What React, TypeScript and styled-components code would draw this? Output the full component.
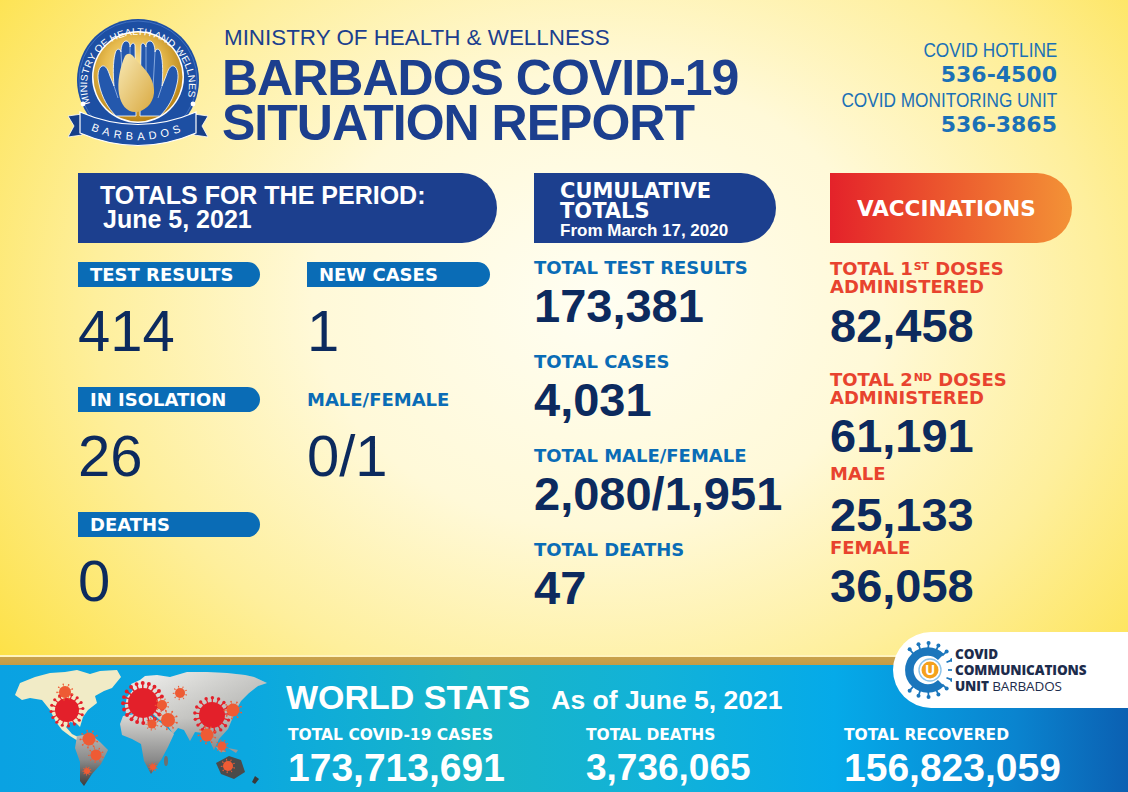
import React from "react";
import styled, { createGlobalStyle } from "styled-components";

const GlobalStyle = createGlobalStyle`
  * { box-sizing: border-box; }
  html, body { margin: 0; padding: 0; }
  body { font-family: "Liberation Sans", Arial, sans-serif; }
`;

const NAVY = "#0c2a5e";
const ROYAL = "#1c3f8e";
const SKY = "#0a6cb6";
const RED = "#e8432e";
const HEAVY = `"DejaVu Sans", "Liberation Sans", sans-serif`;

const Page = styled.div`
  position: relative;
  width: 1128px;
  height: 792px;
  overflow: hidden;
  display: flex;
  flex-direction: column;
  background: radial-gradient(
    ellipse 72% 82% at 53% 38%,
    #fffef2 0%,
    #fff9d8 35%,
    #feef9c 62%,
    #fde24c 90%,
    #fddc30 100%
  );
`;

const Header = styled.header`
  display: flex;
  height: 173px;
  padding: 0 71px 0 68px;
`;

const LogoSvg = styled.svg`
  flex-shrink: 0;
  margin-top: 14px;
`;

const TitleBlock = styled.div`
  margin-left: 14px;
  padding-top: 27px;
  color: ${ROYAL};
`;

const Ministry = styled.div`
  margin: 0 0 7px 2px;
  font-size: 22.4px;
  line-height: 22px;
`;

const BigTitle = styled.div`
  font-size: 50px;
  font-weight: 700;
  line-height: 45px;
  letter-spacing: -1px;
  white-space: nowrap;
`;

const Contact = styled.div`
  margin-left: auto;
  padding-top: 37px;
  text-align: right;
  color: #1b70b6;
`;

const ContactLabel = styled.div`
  font-size: 21px;
  line-height: 25px;
  white-space: nowrap;
`;

const Narrow = styled.span`
  display: inline-block;
  transform: scaleX(0.82);
  transform-origin: right center;
`;

const ContactPhone = styled.div`
  font-family: ${HEAVY};
  font-weight: 700;
  font-size: 22px;
  line-height: 25px;
`;

const Main = styled.main`
  display: flex;
  padding-left: 78px;
`;

const Column = styled.section<{ $w: number; $ml?: number }>`
  width: ${({ $w }) => $w}px;
  margin-left: ${({ $ml }) => $ml ?? 0}px;
  display: flex;
  flex-direction: column;
`;

const Pill = styled.div<{ $bg: string }>`
  height: 70px;
  border-radius: 0 35px 35px 0;
  background: ${({ $bg }) => $bg};
  color: #fff;
`;

const PeriodPill = styled(Pill)`
  padding: 10px 0 0 22px;
  font-size: 25px;
  font-weight: 700;
  line-height: 24px;
  & > div + div {
    padding-left: 3px;
  }
`;

const CumulativePill = styled(Pill)`
  padding: 8px 0 0 26px;
`;

const PillHeavy = styled.div`
  font-family: ${HEAVY};
  font-weight: 700;
  font-size: 21px;
  line-height: 20px;
`;

const PillSmall = styled.div`
  margin-top: 1px;
  font-size: 17px;
  font-weight: 700;
  line-height: 18px;
`;

const VaxPill = styled(Pill)`
  display: flex;
  align-items: center;
  padding-left: 27px;
  font-family: ${HEAVY};
  font-weight: 700;
  font-size: 21.5px;
`;

const PeriodGrid = styled.div`
  display: grid;
  grid-template-columns: 229px 183px;
  row-gap: 27px;
  margin-top: 19px;
`;

const StatCell = styled.div`
  display: flex;
  flex-direction: column;
`;

const Bar = styled.div<{ $w: number }>`
  width: ${({ $w }) => $w}px;
  height: 25px;
  display: flex;
  align-items: center;
  padding-left: 12px;
  border-radius: 0 13px 13px 0;
  background: ${SKY};
  color: #fff;
  font-family: ${HEAVY};
  font-weight: 700;
  font-size: 18px;
`;

const PlainLabel = styled.div`
  height: 25px;
  display: flex;
  align-items: center;
  color: ${SKY};
  font-family: ${HEAVY};
  font-weight: 700;
  font-size: 18px;
`;

const PeriodValue = styled.div`
  margin-top: 15px;
  font-size: 58px;
  line-height: 58px;
  color: ${NAVY};
`;

const Group = styled.div<{ $mt: number }>`
  margin-top: ${({ $mt }) => $mt}px;
`;

const Label = styled.div<{ $color: string }>`
  color: ${({ $color }) => $color};
  font-family: ${HEAVY};
  font-weight: 700;
  font-size: 18px;
  line-height: 20px;
  white-space: nowrap;
`;

const VaxLabel = styled(Label)`
  line-height: 18px;
`;

const Sup = styled.span`
  font-size: 11px;
  line-height: 11px;
  vertical-align: 5px;
  margin-left: 1px;
`;

const Value = styled.div<{ $mt: number }>`
  margin-top: ${({ $mt }) => $mt}px;
  font-size: 47px;
  font-weight: 700;
  line-height: 47px;
  color: ${NAVY};
  white-space: nowrap;
`;

const Bottom = styled.footer`
  position: relative;
  margin-top: auto;
  height: 137px;
  display: flex;
  flex-direction: column;
`;

const GoldLine = styled.div`
  height: 10px;
  background: linear-gradient(to bottom, #fff4bd 0, #fff4bd 2px, #c9a24c 2px, #c49b45 100%);
`;

const BlueBar = styled.div`
  flex: 1;
  display: flex;
  background: linear-gradient(
    90deg,
    #0aa2e2 0%,
    #0ba8e0 22%,
    #18b5c7 42%,
    #12b2d8 58%,
    #05aae9 74%,
    #0a84cf 90%,
    #0b60b2 100%
  );
`;

const MapSvg = styled.svg`
  flex-shrink: 0;
  margin-left: 4px;
`;

const WorldBlock = styled.div`
  margin-left: 6px;
  padding-top: 15px;
  color: #fff;
`;

const WorldHeading = styled.div`
  display: flex;
  align-items: baseline;
  gap: 21px;
  font-weight: 700;
`;

const WorldTitle = styled.span`
  font-size: 34px;
  line-height: 34px;
`;

const WorldDate = styled.span`
  font-size: 26.5px;
`;

const WorldGrid = styled.div`
  display: grid;
  grid-template-columns: 298px 258px auto;
  margin-top: 11px;
  padding-left: 2px;
`;

const WorldLabel = styled.div`
  font-family: ${HEAVY};
  font-weight: 700;
  font-size: 15.5px;
  line-height: 17px;
`;

const WorldValue = styled.div<{ $size: number }>`
  margin-top: 4px;
  font-size: ${({ $size }) => $size}px;
  font-weight: 700;
  line-height: 40px;
`;

const Badge = styled.div`
  position: absolute;
  top: -23px;
  right: 0;
  width: 235px;
  height: 76px;
  display: flex;
  align-items: center;
  padding-left: 7px;
  border-radius: 38px 0 0 38px;
  background: #fff;
`;

const BadgeText = styled.div`
  margin-left: 3px;
  font-family: "Open Sans", "Liberation Sans", sans-serif;
  font-size: 13.5px;
  line-height: 16px;
  font-weight: 800;
  color: #1d2c4c;
  letter-spacing: -0.1px;
`;

const Light = styled.span`
  font-weight: 400;
`;

/* ---------- drawings ---------- */

const MinistryLogo = () => (
  <LogoSvg width={140} height={134} viewBox="0 0 140 134">
    <defs>
      <radialGradient id="gold" cx="45%" cy="40%" r="60%">
        <stop offset="0%" stopColor="#fbe7a0" />
        <stop offset="55%" stopColor="#e7bb4f" />
        <stop offset="100%" stopColor="#b98417" />
      </radialGradient>
      <linearGradient id="island" x1="0" y1="0" x2="1" y2="1">
        <stop offset="0%" stopColor="#f8e9b4" />
        <stop offset="100%" stopColor="#d9a941" />
      </linearGradient>
      <path id="arcTop" d="M 21 86 A 51 51 0 1 1 119 86" />
      <path id="arcRibbon" d="M 18 114 Q 70 138 122 114" />
    </defs>
    <circle cx="70" cy="66" r="61" fill="#1d4fa3" />
    <circle cx="70" cy="66" r="59" fill="none" stroke="#3f6fc0" strokeWidth="1" />
    <circle cx="70" cy="63" r="46" fill="#fff" />
    <circle cx="70" cy="63" r="44.5" fill="url(#gold)" />
    <text fill="#fff" fontSize="9.6" fontFamily="Liberation Sans, sans-serif">
      <textPath href="#arcTop" startOffset="50%" textAnchor="middle" textLength="196" lengthAdjust="spacingAndGlyphs">
        MINISTRY OF HEALTH AND WELLNESS
      </textPath>
    </text>
    <circle cx="15" cy="90" r="2.4" fill="#fff" />
    <circle cx="125" cy="90" r="2.4" fill="#fff" />
    {/* left hand: thumb, palm and fingers */}
    <path
      d="M68 102 L48 102 C40 94 34 84 31 70 C29 62 30 54 34 52 C38 51 40 56 42 62 L46 72 C45 60 45 48 47 40 C48 34 52 34 53 38 C53 32 55 27 58 27 C61 27 62 30 62 33 C63 29 66 28 67 31 L68 102 Z"
      fill="#2458ad"
      stroke="#fff"
      strokeWidth="0.8"
    />
    {/* right hand mirrored */}
    <path
      d="M72 102 L92 102 C100 94 106 84 109 70 C111 62 110 54 106 52 C102 51 100 56 98 62 L94 72 C95 60 95 48 93 40 C92 34 88 34 87 38 C87 32 85 27 82 27 C79 27 78 30 78 33 C77 29 74 28 73 31 L72 102 Z"
      fill="#2458ad"
      stroke="#fff"
      strokeWidth="0.8"
    />
    <path
      d="M53 38 L55 74 M62 33 L62 72 M87 38 L85 74 M78 33 L78 72 M46 72 L50 84 M94 72 L90 84"
      stroke="#8fb0e2"
      strokeWidth="0.9"
      fill="none"
    />
    <path
      d="M57 42 C61 37 65 41 69 47 C77 55 85 63 86 75 C87 86 80 96 69 98 C59 99 53 91 51 80 C49 68 52 53 57 42 Z"
      fill="url(#island)"
    />
    <path d="M0 102 L14 100 L14 121 L0 123 L6 112 Z" fill="#163f88" stroke="#fff" strokeWidth="0.8" />
    <path d="M140 102 L126 100 L126 121 L140 123 L134 112 Z" fill="#163f88" stroke="#fff" strokeWidth="0.8" />
    <path d="M12 98 Q70 123 128 98 L128 119 Q70 144 12 119 Z" fill="#1d4fa3" stroke="#fff" strokeWidth="1.2" />
    <text fill="#fff" fontSize="11" fontFamily="Liberation Sans, sans-serif" letterSpacing="4.5">
      <textPath href="#arcRibbon" startOffset="50%" textAnchor="middle">
        BARBADOS
      </textPath>
    </text>
  </LogoSvg>
);

type VirusProps = { x: number; y: number; r: number; color: string };

const Virus = ({ x, y, r, color }: VirusProps) => {
  const count = Math.max(9, Math.round(r * 1.3));
  const spikes = Array.from({ length: count }, (_, i) => {
    const a = (i / count) * Math.PI * 2 + 0.3;
    const c = Math.cos(a);
    const s = Math.sin(a);
    return (
      <g key={i}>
        <line
          x1={x + c * r * 0.9}
          y1={y + s * r * 0.9}
          x2={x + c * r * 1.3}
          y2={y + s * r * 1.3}
          stroke={color}
          strokeWidth={Math.max(0.6, r * 0.1)}
        />
        <circle cx={x + c * r * 1.33} cy={y + s * r * 1.33} r={Math.max(0.6, r * 0.13)} fill={color} />
      </g>
    );
  });
  return (
    <g>
      {spikes}
      <circle cx={x} cy={y} r={r} fill={color} />
    </g>
  );
};

const viruses: VirusProps[] = [
  { x: 67, y: 60, r: 12, color: "#e3202a" },
  { x: 143, y: 53, r: 15, color: "#e3202a" },
  { x: 212, y: 65, r: 13, color: "#e3202a" },
  { x: 65, y: 42, r: 6, color: "#ee5b34" },
  { x: 162, y: 55, r: 5, color: "#ee5b34" },
  { x: 168, y: 70, r: 7, color: "#ee5b34" },
  { x: 152, y: 74, r: 4.5, color: "#ee5b34" },
  { x: 180, y: 43, r: 5, color: "#ee5b34" },
  { x: 233, y: 60, r: 6.5, color: "#ee5b34" },
  { x: 207, y: 85, r: 6.5, color: "#ee5b34" },
  { x: 222, y: 96, r: 4.5, color: "#ee5b34" },
  { x: 89, y: 89, r: 6.5, color: "#ee5b34" },
  { x: 96, y: 105, r: 5.5, color: "#ee5b34" },
  { x: 87, y: 121, r: 3, color: "#ee5b34" },
  { x: 153, y: 117, r: 3, color: "#ee5b34" },
  { x: 228, y: 116, r: 5, color: "#ee5b34" },
];

const EURASIA =
  "M125 56 L127 47 L133 40 L131 34 L140 30 L145 26 L157 25 L170 27 L187 22 L207 22 L227 23 L245 25 L254 27 L267 33 L258 36 L249 43 L241 51 L236 60 L233 67 L228 79 L219 89 L214 100 L209 89 L203 83 L195 82 L190 91 L184 80 L178 78 L173 84 L168 76 L160 70 L153 64 L140 61 L133 63 L126 64 Z";

const WorldMap = () => (
  <MapSvg width={276} height={127} viewBox="4 15 276 127">
    <defs>
      <linearGradient id="silver" x1="0" y1="20" x2="0" y2="140" gradientUnits="userSpaceOnUse">
        <stop offset="0%" stopColor="#f4f4f1" />
        <stop offset="40%" stopColor="#d4d4d1" />
        <stop offset="75%" stopColor="#8a8a8a" />
        <stop offset="100%" stopColor="#2f2f2f" />
      </linearGradient>
      <linearGradient id="silverH" x1="130" y1="0" x2="270" y2="0" gradientUnits="userSpaceOnUse">
        <stop offset="0%" stopColor="#000" stopOpacity="0" />
        <stop offset="100%" stopColor="#000" stopOpacity="0.18" />
      </linearGradient>
    </defs>
    <path
      d="M15 45 L20 33 L35 27 L50 23 L65 22 L77 20 L90 24 L100 21 L117 20 L121 27 L112 38 L104 41 L95 46 L97 53 L88 60 L83 67 L80 77 L76 73 L70 72 L66 77 L72 84 L80 88 L78 91 L70 86 L62 80 L56 72 L50 60 L42 50 L30 48 L22 50 Z"
      fill="#f1ebc6"
    />
    <path d="M77 86 L90 84 L100 92 L108 100 L101 114 L92 124 L84 136 L80 131 L80 112 L75 98 Z" fill="url(#silver)" />
    <path d={EURASIA} fill="url(#silver)" />
    <path d={EURASIA} fill="url(#silverH)" />
    <path d="M123 66 L135 64 L148 65 L160 72 L174 84 L168 97 L161 110 L151 124 L144 111 L141 94 L132 89 L122 85 L120 74 Z" fill="url(#silver)" />
    <ellipse cx="166" cy="111" rx="2" ry="5" fill="#6f6f6f" />
    <path d="M215 96 L222 98 L226 102 L220 102 Z M228 98 L238 100 L236 103 Z" fill="#9a9a9a" />
    <path d="M216 113 L229 106 L241 110 L245 122 L234 129 L221 124 Z" fill="#4b4b4b" />
    <path d="M255 126 L259 129 L255 134 L252 132 Z" fill="#3a3a3a" />
    {viruses.map((v, i) => (
      <Virus key={i} {...v} />
    ))}
  </MapSvg>
);

const CcuLogo = () => {
  const dots = Array.from({ length: 13 }, (_, i) => {
    const a = ((50 + (i * 260) / 12) * Math.PI) / 180;
    const c = Math.cos(a);
    const s = Math.sin(a);
    return (
      <g key={i}>
        <line x1={27 - c * 21} y1={32 - s * 21} x2={27 - c * 26} y2={32 - s * 26} stroke="#1b76bc" strokeWidth="1.7" />
        <circle cx={27 - c * 27} cy={32 - s * 27} r="2" fill="#1b76bc" />
      </g>
    );
  });
  return (
    <svg width={52} height={64} viewBox="0 0 52 64">
      {dots}
      <path d="M41 19 A18.5 18.5 0 1 0 41 45" fill="none" stroke="#1b76bc" strokeWidth="8.5" />
      <circle cx="30" cy="32" r="11" fill="#fff" stroke="#8cc3ea" strokeWidth="1.4" />
      <circle cx="30" cy="32" r="8.5" fill="#f5a11c" />
      <text x="30" y="37" textAnchor="middle" fontSize="13.5" fontWeight="700" fill="#fff" fontFamily="Open Sans, sans-serif">
        U
      </text>
    </svg>
  );
};

/* ---------- data ---------- */

const period = [
  { label: "TEST RESULTS", value: "414", bar: true },
  { label: "NEW CASES", value: "1", bar: true },
  { label: "IN ISOLATION", value: "26", bar: true },
  { label: "MALE/FEMALE", value: "0/1", bar: false },
  { label: "DEATHS", value: "0", bar: true },
];

const cumulative = [
  { label: "TOTAL TEST RESULTS", value: "173,381" },
  { label: "TOTAL CASES", value: "4,031" },
  { label: "TOTAL MALE/FEMALE", value: "2,080/1,951" },
  { label: "TOTAL DEATHS", value: "47" },
];

const world = [
  { label: "TOTAL COVID-19 CASES", value: "173,713,691", size: 39 },
  { label: "TOTAL DEATHS", value: "3,736,065", size: 37 },
  { label: "TOTAL RECOVERED", value: "156,823,059", size: 39 },
];

export default function App() {
  return (
    <Page>
      <GlobalStyle />
      <Header>
        <MinistryLogo />
        <TitleBlock>
          <Ministry>MINISTRY OF HEALTH &amp; WELLNESS</Ministry>
          <BigTitle>BARBADOS COVID-19</BigTitle>
          <BigTitle>SITUATION REPORT</BigTitle>
        </TitleBlock>
        <Contact>
          <ContactLabel>
            <Narrow>COVID HOTLINE</Narrow>
          </ContactLabel>
          <ContactPhone>536-4500</ContactPhone>
          <ContactLabel>
            <Narrow>COVID MONITORING UNIT</Narrow>
          </ContactLabel>
          <ContactPhone>536-3865</ContactPhone>
        </Contact>
      </Header>

      <Main>
        <Column $w={419}>
          <PeriodPill $bg={ROYAL}>
            <div>TOTALS FOR THE PERIOD:</div>
            <div>June 5, 2021</div>
          </PeriodPill>
          <PeriodGrid>
            {period.map((p) => (
              <StatCell key={p.label}>
                {p.bar ? <Bar $w={p.label === "NEW CASES" ? 183 : 182}>{p.label}</Bar> : <PlainLabel>{p.label}</PlainLabel>}
                <PeriodValue>{p.value}</PeriodValue>
              </StatCell>
            ))}
          </PeriodGrid>
        </Column>

        <Column $w={242} $ml={37}>
          <CumulativePill $bg={ROYAL}>
            <PillHeavy>CUMULATIVE</PillHeavy>
            <PillHeavy>TOTALS</PillHeavy>
            <PillSmall>From March 17, 2020</PillSmall>
          </CumulativePill>
          {cumulative.map((c, i) => (
            <Group key={c.label} $mt={i === 0 ? 15 : 23}>
              <Label $color={SKY}>{c.label}</Label>
              <Value $mt={4}>{c.value}</Value>
            </Group>
          ))}
        </Column>

        <Column $w={242} $ml={54}>
          <VaxPill $bg="linear-gradient(90deg, #e4222a 0%, #ec5a2e 50%, #f39236 100%)">VACCINATIONS</VaxPill>
          <Group $mt={17}>
            <VaxLabel $color={RED}>
              TOTAL 1<Sup>ST</Sup> DOSES
            </VaxLabel>
            <VaxLabel $color={RED}>ADMINISTERED</VaxLabel>
            <Value $mt={6}>82,458</Value>
          </Group>
          <Group $mt={22}>
            <VaxLabel $color={RED}>
              TOTAL 2<Sup>ND</Sup> DOSES
            </VaxLabel>
            <VaxLabel $color={RED}>ADMINISTERED</VaxLabel>
            <Value $mt={5}>61,191</Value>
          </Group>
          <Group $mt={6}>
            <VaxLabel $color={RED}>MALE</VaxLabel>
            <Value $mt={8}>25,133</Value>
          </Group>
          <Group $mt={1}>
            <VaxLabel $color={RED}>FEMALE</VaxLabel>
            <Value $mt={5}>36,058</Value>
          </Group>
        </Column>
      </Main>

      <Bottom>
        <GoldLine />
        <BlueBar>
          <WorldMap />
          <WorldBlock>
            <WorldHeading>
              <WorldTitle>WORLD STATS</WorldTitle>
              <WorldDate>As of June 5, 2021</WorldDate>
            </WorldHeading>
            <WorldGrid>
              {world.map((w) => (
                <div key={w.label}>
                  <WorldLabel>{w.label}</WorldLabel>
                  <WorldValue $size={w.size}>{w.value}</WorldValue>
                </div>
              ))}
            </WorldGrid>
          </WorldBlock>
        </BlueBar>
        <Badge>
          <CcuLogo />
          <BadgeText>
            <div>COVID</div>
            <div>COMMUNICATIONS</div>
            <div>
              UNIT <Light>BARBADOS</Light>
            </div>
          </BadgeText>
        </Badge>
      </Bottom>
    </Page>
  );
}
